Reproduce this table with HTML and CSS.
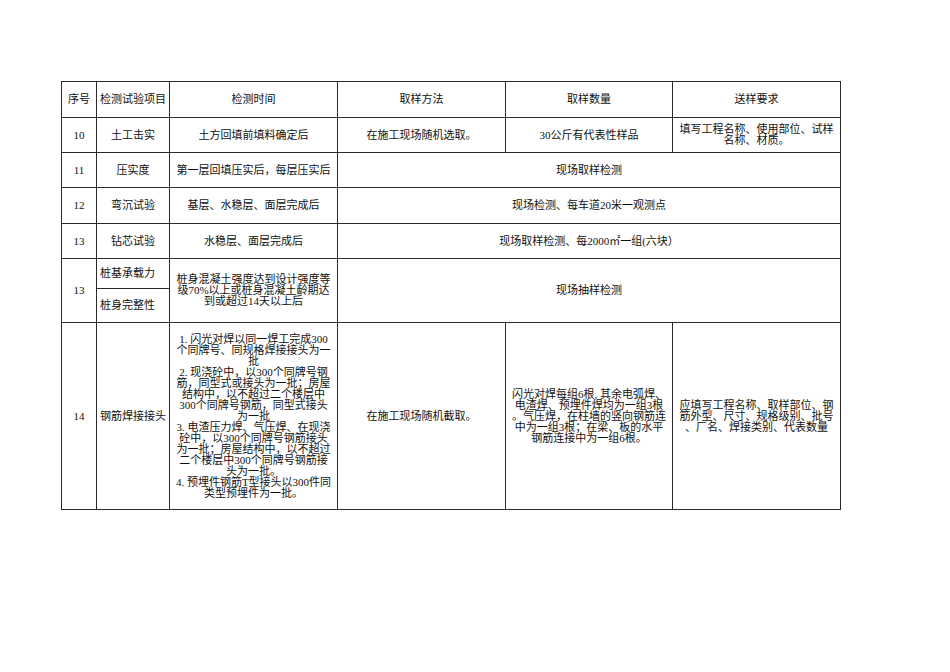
FILE: index.html
```html
<!DOCTYPE html>
<html lang="zh-CN">
<head>
<meta charset="utf-8">
<title>检测试验项目</title>
<link rel="stylesheet" href="styles.css">
</head>
<body>
<div class="page">
<table class="sheet">
  <colgroup>
    <col class="c1"><col class="c2"><col class="c3"><col class="c4"><col class="c5"><col class="c6">
  </colgroup>
  <tr class="r-head">
    <td>序号</td>
    <td class="left">检测试验项目</td>
    <td>检测时间</td>
    <td>取样方法</td>
    <td>取样数量</td>
    <td>送样要求</td>
  </tr>
  <tr class="r-35">
    <td>10</td>
    <td>土工击实</td>
    <td>土方回填前填料确定后</td>
    <td>在施工现场随机选取。</td>
    <td>30公斤有代表性样品</td>
    <td class="multi">填写工程名称、使用部位、试样<br>名称、材质。</td>
  </tr>
  <tr class="r-35">
    <td>11</td>
    <td>压实度</td>
    <td>第一层回填压实后，每层压实后</td>
    <td colspan="3">现场取样检测</td>
  </tr>
  <tr class="r-36">
    <td>12</td>
    <td>弯沉试验</td>
    <td>基层、水稳层、面层完成后</td>
    <td colspan="3">现场检测、每车道20米一观测点</td>
  </tr>
  <tr class="r-35">
    <td>13</td>
    <td>钻芯试验</td>
    <td>水稳层、面层完成后</td>
    <td colspan="3">现场取样检测、每2000㎡一组(六块）</td>
  </tr>
  <tr class="r-30">
    <td rowspan="2">13</td>
    <td class="left">桩基承载力</td>
    <td rowspan="2" class="multi">桩身混凝土强度达到设计强度等<br>级70%以上或桩身混凝土龄期达<br>到或超过14天以上后</td>
    <td rowspan="2" colspan="3">现场抽样检测</td>
  </tr>
  <tr class="r-34">
    <td class="left">桩身完整性</td>
  </tr>
  <tr class="r-big">
    <td>14</td>
    <td class="left">钢筋焊接接头</td>
    <td class="multi">1. 闪光对焊以同一焊工完成300<br>个同牌号、同规格焊接接头为一<br>批<br>2. 现浇砼中，以300个同牌号钢<br>筋，同型式或接头为一批；房屋<br>结构中，以不超过二个楼层中<br>300个同牌号钢筋，同型式接头<br>为一批<br>3. 电渣压力焊、气压焊、在现浇<br>砼中，以300个同牌号钢筋接头<br>为一批；房屋结构中，以不超过<br>二个楼层中300个同牌号钢筋接<br>头为一批。<br>4. 预埋件钢筋T型接头以300件同<br>类型预埋件为一批。</td>
    <td>在施工现场随机截取。</td>
    <td class="multi">闪光对焊每组6根, 其余电弧焊、<br>电渣焊、预埋件焊均为一组3根<br>。气压焊，在柱墙的竖向钢筋连<br>中为一组3根；在梁、板的水平<br>钢筋连接中为一组6根。</td>
    <td class="multi">应填写工程名称、取样部位、钢<br>筋外型、尺寸、规格级别、批号<br>、厂名、焊接类别、代表数量</td>
  </tr>
</table>
</div>
</body>
</html>
```

FILE: styles.css
```css
html, body {
  margin: 0;
  padding: 0;
  background: #ffffff;
}

.page {
  padding: 81px 0 0 61px;
}

.sheet {
  border-collapse: collapse;
  table-layout: fixed;
  width: 780px;
  font-family: "Liberation Serif", "Noto Sans CJK SC", serif;
  font-size: 11px;
  color: #111;
}

.c1 { width: 35px; }
.c2 { width: 73px; }
.c3 { width: 168px; }
.c4 { width: 168px; }
.c5 { width: 167px; }
.c6 { width: 168px; }

.sheet td {
  border: 1px solid #2a2a2a;
  padding: 0 2px;
  text-align: center;
  vertical-align: middle;
  white-space: nowrap;
  overflow: hidden;
  line-height: 13px;
}

.sheet td.left {
  text-align: left;
  padding-left: 3px;
}

.sheet td.multi {
  line-height: 11px;
}

.r-head { height: 36px; }
.r-35 { height: 35px; }
.r-36 { height: 36px; }
.r-30 { height: 30px; }
.r-34 { height: 34px; }
.r-big { height: 187px; }
```
